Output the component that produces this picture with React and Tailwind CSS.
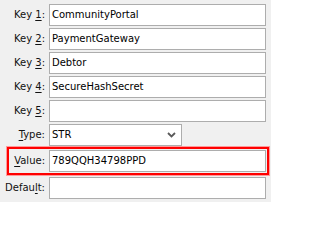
const rows = [
  { pre: "Key ", key: "1", post: ":", value: "CommunityPortal" },
  { pre: "Key ", key: "2", post: ":", value: "PaymentGateway" },
  { pre: "Key ", key: "3", post: ":", value: "Debtor" },
  { pre: "Key ", key: "4", post: ":", value: "SecureHashSecret" },
  { pre: "Key ", key: "5", post: ":", value: "" },
];

const Label = ({ pre, k, post, className = "w-[49px]" }) => (
  <div className={`${className} shrink-0 text-right pr-[4px] leading-none`}>
    {pre}
    <span className="underline underline-offset-[2px]">{k}</span>
    {post}
  </div>
);

const Field = ({ value, className = "w-[217px]" }) => (
  <div className={`${className} h-[22px] shrink-0 bg-white border border-[#adadad] flex items-center pl-[2px] text-black leading-none whitespace-nowrap overflow-hidden`}>
    {value}
  </div>
);

export default function App() {
  return (
    <div
      className="w-[271px] h-[202px] bg-[#f0f0f0] text-[10px] text-[#111] pt-[4px] flex flex-col overflow-hidden"
      style={{ fontFamily: '"DejaVu Sans", Verdana, sans-serif' }}
    >
      {/* key rows */}
      {rows.map((r) => (
        <div key={r.key} className="flex items-center h-[22px] mb-[2px]">
          <Label pre={r.pre} k={r.key} post={r.post} />
          <Field value={r.value} />
        </div>
      ))}

      {/* type dropdown */}
      <div className="flex items-center h-[22px]">
        <Label pre="" k="T" post="ype:" />
        <div className="w-[133px] h-[22px] bg-white border border-[#adadad] flex items-center justify-between pl-[2px] pr-[5px] leading-none">
          <span className="text-black">STR</span>
          <svg width="9" height="6" viewBox="0 0 9 6" fill="none">
            <path d="M1 1l3.5 3.5L8 1" stroke="#5a5a5a" strokeWidth="1.8" />
          </svg>
        </div>
      </div>

      {/* highlighted value row */}
      <div className="mt-[1px] ml-[7px] w-[262px] h-[28px] border-2 border-[#ff0000] shadow-[0_0_0_1px_#ff9a9a] flex items-center pr-[1px]">
        <Label pre="" k="V" post="alue:" className="w-[40px]" />
        <Field value="789QQH34798PPD" />
      </div>

      {/* default row */}
      <div className="flex items-center h-[22px] mt-[2px]">
        <Label pre="Defau" k="l" post="t:" />
        <Field value="" />
      </div>
    </div>
  );
}
